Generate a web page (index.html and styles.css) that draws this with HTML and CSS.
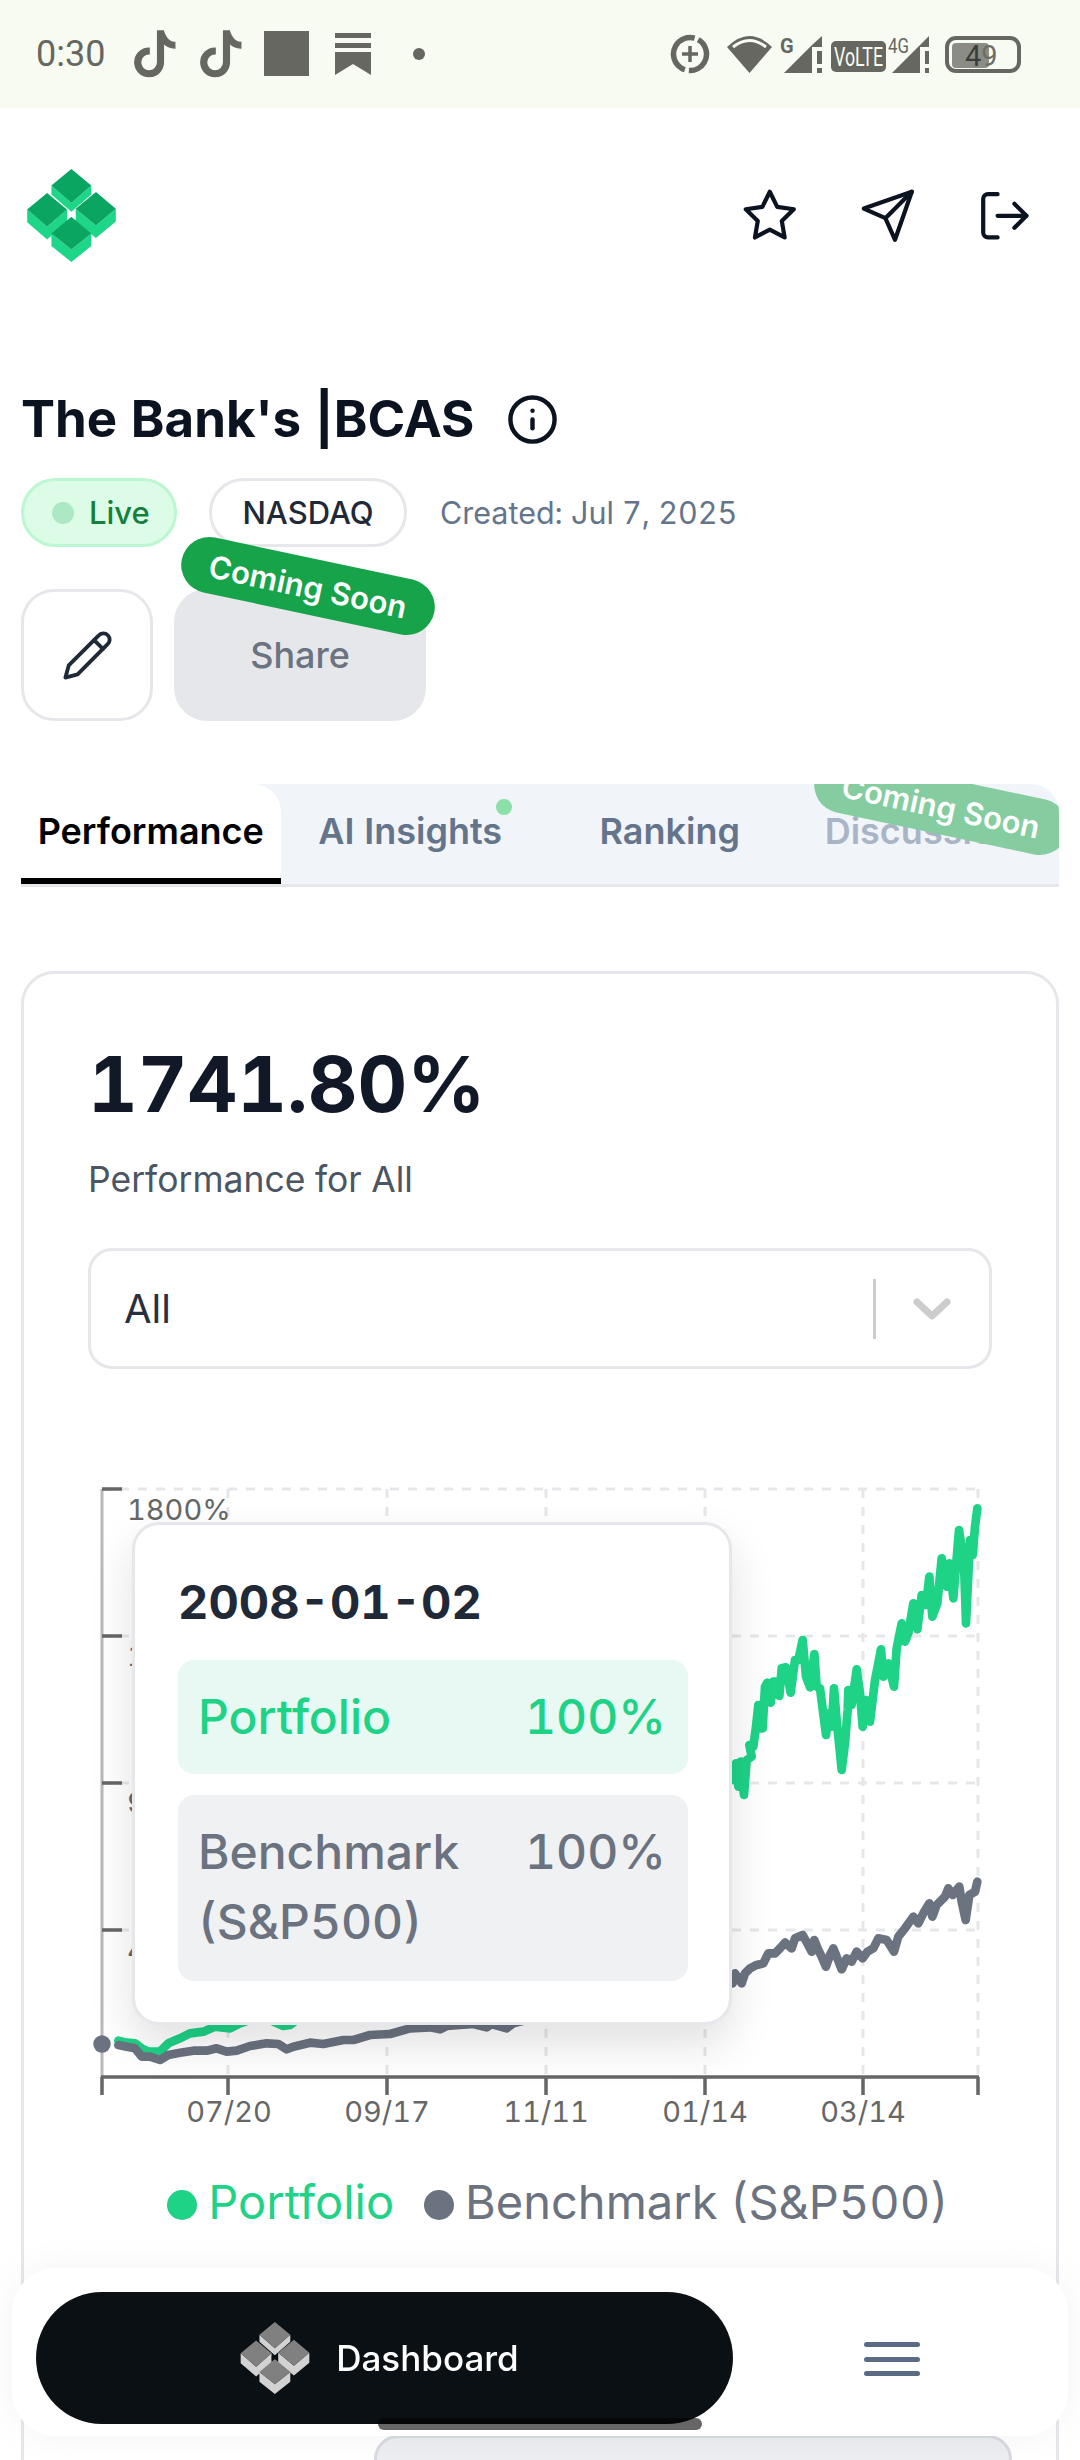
FILE: index.html
```html
<!DOCTYPE html>
<html lang="en">
<head>
<meta charset="utf-8">
<title>The Bank's |BCAS</title>
<link rel="stylesheet" href="styles.css">
</head>
<body>
<svg class="defs" width="0" height="0" aria-hidden="true">
  <symbol id="cubes" viewBox="80 88 267 280">
    <polygon class="cube-side" points="153,138 213,190 273,138 273,165 213,217 153,165"/>
    <polygon class="cube-top" points="153,138 213,88 273,138 213,190"/>
    <polygon class="cube-side" points="80,210 140,262 200,210 200,248 140,300 80,248"/>
    <polygon class="cube-top" points="80,210 140,160 200,210 140,262"/>
    <polygon class="cube-side" points="226,208 287,258 347,208 347,246 287,296 226,246"/>
    <polygon class="cube-top" points="226,208 287,157 347,208 287,258"/>
    <polygon class="cube-side" points="153,282 213,330 273,282 273,320 213,368 153,320"/>
    <polygon class="cube-top" points="153,282 213,232 273,282 213,330"/>
    <polygon class="cube-mark" points="201,220 213,226 225,220 225,238 213,232 201,238"/>
  </symbol>
</svg>

<div class="status-bar">
  <div class="status-left">
    <span class="status-time">0:30</span>
    <svg class="status-icons-left" viewBox="134 28 295 52" width="295" height="52">
      <path class="st-fill st-thick" transform="translate(132 31) scale(2.85)" d="M9 0h1.98c.144.715.54 1.617 1.235 2.512C12.895 3.389 13.797 4 15 4v2c-1.753 0-3.07-.814-4-1.829V11a5 5 0 1 1-5-5v2a3 3 0 1 0 3 3V0Z"/>
      <path class="st-fill st-thick" transform="translate(198 31) scale(2.85)" d="M9 0h1.98c.144.715.54 1.617 1.235 2.512C12.895 3.389 13.797 4 15 4v2c-1.753 0-3.07-.814-4-1.829V11a5 5 0 1 1-5-5v2a3 3 0 1 0 3 3V0Z"/>
      <rect class="st-fill" x="264" y="31" width="45" height="45"/>
      <path class="st-fill" d="M335 33h36v5h-36zM335 43h36v5h-36zM335 52h36v23l-18-11-18 11z"/>
      <ellipse class="st-fill" cx="419" cy="54" rx="6" ry="6"/>
    </svg>
  </div>
  <svg class="status-icons-right" viewBox="670 30 355 46" width="355" height="46">
    <circle class="st-ring" cx="690" cy="53" r="16.5" transform="rotate(-60 690 53)"/>
    <path class="st-plus" d="M682 53h16M690 45v16"/>
    <path class="st-fill" d="M727 46Q749.500 24 772 46L749.500 72Z"/>
    <path class="st-gap" d="M733 46Q749.500 33 766 46"/>
    <text class="st-text st-bold" x="780" y="52">G</text>
    <path class="st-fill" d="M784 72H812V44ZM812 44L822 35V46H812ZM817 50h5v13h-5zM817 67h5v5h-5z"/>
    <rect class="st-fill" x="831" y="40" width="55" height="31" rx="5"/>
    <text class="st-volte" x="834" y="65" textLength="49" lengthAdjust="spacingAndGlyphs">VoLTE</text>
    <text class="st-text" x="888" y="52" textLength="21" lengthAdjust="spacingAndGlyphs">4G</text>
    <path class="st-fill" d="M892 72H920V44ZM920 44L929 35V46H920ZM925 50h4v13h-4zM925 67h4v5h-4z"/>
    <rect class="st-batt" x="947" y="37" width="72" height="33" rx="9"/>
    <rect class="st-batt-fill" x="952" y="42" width="37" height="25" rx="4"/>
    <text class="st-batt-text" x="965" y="65"><tspan class="st-batt-dark">4</tspan>9</text>
  </svg>
</div>

<header class="app-header">
  <svg class="logo logo-green" width="89" height="93"><use href="#cubes"/></svg>
  <div class="header-actions">
    <svg class="ico" viewBox="0 0 24 24"><polygon points="12 2 15.09 8.26 22 9.27 17 14.14 18.18 21.02 12 17.77 5.82 21.02 7 14.14 2 9.27 8.91 8.26 12 2"/></svg>
    <svg class="ico" viewBox="0 0 24 24"><path d="m22 2-7 20-4-9-9-4Z"/><path d="M22 2 11 13"/></svg>
    <svg class="ico" viewBox="0 0 24 24"><path d="M9 21H5a2 2 0 0 1-2-2V5a2 2 0 0 1 2-2h4"/><path d="m16 17 5-5-5-5"/><path d="M21 12H9"/></svg>
  </div>
</header>

<main class="page">
  <div class="title-row">
    <h1 class="title">The Bank's |BCAS</h1>
    <svg class="ico info" viewBox="0 0 24 24"><circle cx="12" cy="12" r="10"/><path d="M12 16v-4"/><path d="M12 8h.01"/></svg>
  </div>

  <div class="meta-row">
    <span class="chip chip-live"><i class="live-dot"></i>Live</span>
    <span class="chip chip-plain">NASDAQ</span>
    <span class="created">Created: Jul 7, 2025</span>
  </div>

  <div class="actions">
    <button class="btn-edit">
      <svg class="ico pencil" viewBox="0 0 24 24"><path d="M17 3a2.85 2.83 0 1 1 4 4L7.500 20.500 2 22l1.500-5.500Z"/><path d="m15 5 4 4"/></svg>
    </button>
    <div class="btn-share">Share<span class="soon soon-share">Coming Soon</span></div>
  </div>

  <nav class="tabs">
    <span class="tab tab-active">Performance</span>
    <span class="tab">AI Insights<i class="tab-dot"></i></span>
    <span class="tab">Ranking</span>
    <span class="tab tab-muted">Discussion</span>
    <span class="soon soon-tab">Coming Soon</span>
  </nav>

  <section class="card">
    <div class="big">1741.80%</div>
    <div class="sub">Performance for All</div>
    <div class="select">
      <span class="select-value">All</span>
      <i class="select-sep"></i>
      <svg class="chev" viewBox="0 0 40 24"><path d="M5 5l15 14L35 5"/></svg>
    </div>

    <div class="chart">
      <svg class="chart-svg" viewBox="24 1440 1032 720" width="1032" height="720">
        <path class="grid" d="M102 1489H978M102 1636H978M102 1783H978M102 1930H978M228 1489V2077M387 1489V2077M546 1489V2077M705 1489V2077M863 1489V2077M978 1489V2077"/>
        <path class="axis-y" d="M102 1489V2077"/>
        <path class="axis" d="M102 1489H122M102 1636H122M102 1783H122M102 1930H122"/>
        <path class="axis-x" d="M101 2077H979M102 2077V2095M228 2077V2095M387 2077V2095M546 2077V2095M705 2077V2095M863 2077V2095M978 2077V2095"/>
        <text class="tick" x="127" y="1520">1800%</text>
        <text class="tick" x="127" y="1666">1350%</text>
        <text class="tick" x="127" y="1813">900%</text>
        <text class="tick" x="127" y="1960">450%</text>
        <text class="tick tick-x" x="229" y="2122">07/20</text>
        <text class="tick tick-x" x="387" y="2122">09/17</text>
        <text class="tick tick-x" x="546" y="2122">11/11</text>
        <text class="tick tick-x" x="705" y="2122">01/14</text>
        <text class="tick tick-x" x="863" y="2122">03/14</text>
        <g transform="translate(90 2010) scale(.33333)">
          <path class="line-green" d="M85 92L110 98 135 100 155 115 175 125 210 125 235 100 270 85 300 70 340 65 375 50 420 55 450 40 480 30 540 30 580 48 600 45 620 30 1935 -720"/>
        </g>
        <g transform="translate(720 1460) scale(.33333)">
          <path class="line-green" d="M40 960L48 910 55 980 62 905 72 1005 80 900 95 890 88 855 100 860 108 800 115 735 125 735 122 805 128 805 135 680 142 668 152 728 160 665 170 665 178 708 185 625 198 622 212 698 225 600 235 600 248 540 258 650 270 682 283 582 290 680 300 685 318 825 325 760 335 800 342 685 350 780 365 930 375 850 383 750 385 690 395 735 410 628 420 700 428 800 437 720 450 785 465 660 483 568 490 650 505 610 522 680 530 565 545 490 555 545 565 520 580 430 592 508 605 405 618 435 628 350 637 470 652 430 665 295 680 380 688 310 700 415 717 210 732 310 738 490 750 240 758 285 765 200 772 145"/>
        </g>
        <g transform="translate(90 2010) scale(.33333)">
          <path class="line-gray" d="M85 105L110 110 135 115 155 140 180 140 210 150 235 135 270 128 310 122 350 122 380 115 410 125 440 122 480 108 530 100 565 102 590 118 610 110 660 98 700 102 760 90 790 90 840 75 900 72 960 55 1020 52 1050 58 1070 48 1110 45 1150 42 1190 52 1205 42 1250 55 1270 40 1350 20 1929 -87"/>
        </g>
        <g transform="translate(730 1870) scale(.33333)">
          <path class="line-gray" d="M8 340L15 310 25 325 35 340 45 310 60 295 80 285 100 280 115 250 135 250 150 235 165 218 185 235 195 205 218 195 232 220 245 245 253 210 265 240 275 260 288 290 300 255 310 235 322 265 335 298 350 265 365 275 380 245 398 265 412 245 430 235 445 205 470 210 492 245 505 200 525 175 550 140 565 160 580 130 598 100 607 140 620 105 645 80 655 55 668 75 688 50 695 95 707 150 718 75 735 65 742 35"/>
        </g>
        <circle class="dot-gray" cx="102" cy="2044" r="8.700"/>
      </svg>
      <div class="tooltip">
        <div class="tt-date">2008-01-02</div>
        <div class="tt-row tt-green"><span>Portfolio</span><span>100%</span></div>
        <div class="tt-row tt-gray"><span>Benchmark (S&amp;P500)</span><span>100%</span></div>
      </div>
    </div>

    <div class="legend">
      <span class="legend-item legend-green"><i class="legend-dot"></i>Portfolio</span>
      <span class="legend-item legend-gray"><i class="legend-dot"></i>Benchmark (S&amp;P500)</span>
    </div>

    <div class="next-card"></div>
  </section>
</main>

<div class="bottom-nav">
  <div class="dash-pill">
    <svg class="logo logo-gray" width="70" height="72"><use href="#cubes"/></svg>
    <span>Dashboard</span>
  </div>
  <div class="burger"><i></i><i></i><i></i></div>
</div>
<div class="home-indicator"></div>
</body>
</html>
```

FILE: styles.css
```css
* { box-sizing: border-box; }
html, body { margin: 0; padding: 0; height: 2460px; overflow: hidden; background: #fff; }
body { font-family: Inter, "Noto Sans", sans-serif; color: #0f172a; width: 1080px; font-variant-numeric: tabular-nums; }
.defs { position: absolute; }

/* status bar */
.status-bar { height: 108px; background: #f8fbf2; display: flex; align-items: center; justify-content: space-between; padding: 0 55px 0 36px; }
.status-left { display: flex; align-items: center; gap: 29px; }
.status-time { font-family: Roboto, sans-serif; font-size: 36px; color: #656760; width: 69px; }
.status-icons-left, .status-icons-right { display: block; }
.st-fill { fill: #656760; }
.st-thick { stroke: #656760; stroke-width: .5; }
.st-ring { fill: none; stroke: #656760; stroke-width: 5.5; stroke-dasharray: 44 4 51 4; }
.st-plus { fill: none; stroke: #656760; stroke-width: 3.5; }
.st-gap { fill: none; stroke: #f8fbf2; stroke-width: 3; }
.st-text { font-family: Roboto, sans-serif; font-size: 20px; fill: #656760; }
.st-bold { font-weight: 700; }
.st-volte { font-family: Roboto, sans-serif; font-size: 25px; fill: #f8fbf2; }
.st-batt { fill: none; stroke: #656760; stroke-width: 4; }
.st-batt-fill { fill: #8a8c85; }
.st-batt-text { font-family: Roboto, sans-serif; font-size: 29px; fill: #6c6e68; }
.st-batt-dark { fill: #3b3d3a; }

/* header */
.app-header { display: flex; justify-content: space-between; align-items: center; padding: 61px 46px 0 27px; }
.logo { display: block; }
.logo-green { --top: #0aa561; --side: #1ed688; --mark: #ffffff; }
.logo-gray { --top: #808080; --side: #d2d2d2; --mark: #0b1014; }
.cube-top { fill: var(--top); }
.cube-side { fill: var(--side); }
.cube-mark { fill: var(--mark); }
.header-actions { display: flex; gap: 60px; }
.ico { width: 57.6px; height: 57.6px; fill: none; stroke: #0b1220; stroke-width: 1.75; stroke-linecap: round; stroke-linejoin: round; display: block; }

/* page */
.page { padding: 0 21px; }
.title-row { display: flex; align-items: center; gap: 32px; margin-top: 127px; height: 60px; }
.title { margin: 0; font-size: 51px; font-weight: 700; line-height: 60px; color: #0b1220; }
.info { width: 53px; height: 53px; stroke-width: 2; }

.meta-row { display: flex; align-items: center; margin-top: 29px; height: 69px; }
.chip { height: 69px; border-radius: 35px; border: 3px solid #e5e7eb; display: flex; align-items: center; font-size: 31px; font-weight: 500; }
.chip-live { width: 156px; padding-left: 28px; gap: 15px; background: #dcfce7; border-color: #bbf7d0; color: #15803d; }
.live-dot { width: 22px; height: 22px; border-radius: 50%; background: #abe8c3; }
.chip-plain { width: 198px; margin-left: 32px; justify-content: center; color: #1f2937; }
.created { margin-left: 33px; font-size: 30.500px; color: #64748b; }

.actions { display: flex; gap: 21px; margin-top: 42px; height: 132px; }
.btn-edit { width: 132px; height: 132px; border: 3px solid #e5e7eb; border-radius: 33px; background: #fff; display: flex; align-items: center; justify-content: center; padding: 0; }
.pencil { width: 53px; height: 53px; stroke: #1f2937; }
.btn-share { position: relative; width: 252px; height: 132px; border-radius: 33px; background: #e5e7eb; color: #6b7280; font-size: 36px; font-weight: 500; display: flex; align-items: center; justify-content: center; }
.soon { position: absolute; width: 258px; height: 56px; border-radius: 28px; background: #16a34a; color: #fff; font-size: 31px; font-weight: 600; display: flex; align-items: center; justify-content: center; transform: rotate(12deg); white-space: nowrap; }
.soon-share { left: 5px; top: -31px; }
.soon-tab { right: -11px; top: -6px; background: #85cda0; }

/* tabs */
.tabs { position: relative; display: grid; grid-template-columns: repeat(4, 1fr); height: 103px; margin-top: 63px; background: #f1f4f9; border-bottom: 3px solid #e5e7eb; border-radius: 28px 28px 0 0; overflow: hidden; }
.tab { position: relative; display: flex; align-items: center; justify-content: center; height: 100px; padding-bottom: 6px; font-size: 36px; font-weight: 600; color: #64748b; }
.tab-active { background: #fff; color: #000; border-bottom: 6px solid #000; border-radius: 0 28px 0 0; padding-bottom: 0; }
.tab-muted { color: #a9b5c6; padding-right: 18px; }
.tab-dot { position: absolute; left: 215px; top: 15px; width: 16px; height: 16px; border-radius: 50%; background: #8be0a8; }

/* card */
.card { margin-top: 84px; height: 1600px; border: 3px solid #e5e7eb; border-radius: 33px; padding: 70px 64px 0; }
.big { font-size: 77px; line-height: 80px; font-weight: 700; color: #111827; }
.sub { margin-top: 34px; font-size: 35.500px; line-height: 44px; color: #4b5563; }
.select { margin-top: 46px; height: 121px; border: 3px solid #e5e7eb; border-radius: 24px; display: flex; align-items: center; padding: 0 37px 0 33px; }
.select-value { flex: 1; font-size: 40px; color: #27303f; }
.select-sep { width: 3px; height: 60px; background: #cccccc; }
.chev { width: 40px; height: 24px; margin-left: 36px; fill: none; stroke: #cccccc; stroke-width: 7; stroke-linecap: round; stroke-linejoin: round; }

/* chart */
.chart { position: relative; margin: 71px -64px 0; height: 720px; }
.chart-svg { display: block; }
.grid { fill: none; stroke: #e5e7eb; stroke-width: 3; stroke-dasharray: 9 9; }
.axis, .axis-x { fill: none; stroke: #666666; stroke-width: 3.5; }
.axis-y { fill: none; stroke: #b9b9b9; stroke-width: 3; }
.tick { font-family: Inter, sans-serif; font-size: 29px; fill: #666666; }
.tick-x { text-anchor: middle; }
.line-green { fill: none; stroke: #1ed286; stroke-width: 26; stroke-linejoin: round; stroke-linecap: round; }
.line-gray { fill: none; stroke: #6b7280; stroke-width: 26; stroke-linejoin: round; stroke-linecap: round; }
.dot-gray { fill: #6b7280; }

.tooltip { position: absolute; left: 108px; top: 82px; width: 600px; height: 503px; background: #fff; border: 3px solid #e5e7eb; border-radius: 27px; padding: 47px 41px 0 43px; box-shadow: 0 20px 45px rgba(0, 0, 0, .12); }
.tt-date { font-size: 47px; line-height: 60px; font-weight: 700; color: #1f2937; margin-bottom: 28px; }
.tt-row { display: flex; justify-content: space-between; gap: 44px; padding: 22px 22px 22px 20px; font-size: 48px; line-height: 70px; font-weight: 500; border-radius: 16px; }
.tt-green { background: #e8f9f3; color: #1ed286; }
.tt-gray { margin-top: 21px; padding-bottom: 24px; background: #f0f1f3; color: #6b7280; }

.legend { display: flex; justify-content: center; gap: 30px; margin: 12px -64px 0 -28px; height: 60px; font-size: 47px; line-height: 60px; }
.legend-item { display: flex; align-items: center; gap: 11px; }
.legend-dot { width: 30px; height: 30px; border-radius: 50%; background: currentColor; margin-top: 6px; }
.legend-green { color: #1ed286; }
.legend-gray { color: #6b7280; }
.next-card { margin: 203px 0 0 286px; width: 638px; height: 80px; background: #eceef1; border: 3px solid #d9dbe3; border-radius: 24px; }

/* bottom nav */
.bottom-nav { position: fixed; left: 12px; top: 2268px; width: 1056px; height: 168px; background: #fff; border-radius: 44px; padding: 24px; display: flex; box-shadow: 0 0 40px rgba(0, 0, 0, .05); }
.dash-pill { width: 697px; height: 132px; border-radius: 66px; background: #0b1014; color: #fff; display: flex; align-items: center; justify-content: center; gap: 26px; font-size: 35px; font-weight: 500; padding-right: 10px; }
.burger { margin: 50px 0 0 131px; width: 56px; display: flex; flex-direction: column; gap: 9.500px; }
.burger i { display: block; height: 5px; border-radius: 3px; background: #5b6b85; }
.home-indicator { position: fixed; left: 378px; top: 2418px; width: 324px; height: 12px; border-radius: 6px; background: rgba(0, 0, 0, .6); }
```
